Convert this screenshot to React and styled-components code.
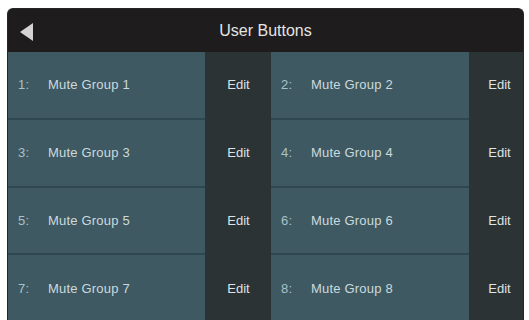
import React from 'react';
import styled, { createGlobalStyle } from 'styled-components';

const GlobalStyle = createGlobalStyle`
  html, body {
    margin: 0;
    padding: 0;
    background: #ffffff;
    font-family: "Liberation Sans", Arial, sans-serif;
  }
`;

const Page = styled.div`
  padding: 8px 5px 0 7px;
  height: 320px;
  box-sizing: border-box;
  overflow: hidden;
`;

const Panel = styled.div`
  height: 312px;
  border: 1px solid #262626;
  border-bottom: none;
  border-radius: 6px 6px 0 0;
  overflow: hidden;
  background: #2c3334;
  display: flex;
  flex-direction: column;
`;

const Header = styled.header`
  height: 43px;
  flex-shrink: 0;
  position: relative;
  display: flex;
  align-items: center;
  justify-content: center;
  background: #1e1c1c;
  color: #e4e4e4;
  font-size: 16px;
`;

const Back = styled.button`
  position: absolute;
  left: 9px;
  top: 13px;
  width: 20px;
  height: 20px;
  padding: 0;
  border: none;
  background: none;
  display: flex;
  align-items: center;
  justify-content: center;
`;

const Grid = styled.div`
  flex: 1;
  display: grid;
  grid-template-columns: 197px 66px 198px 1fr;
  grid-template-rows: repeat(4, 1fr);
  row-gap: 2px;
  background: #2c3334;
`;

const Button = styled.div`
  display: flex;
  align-items: center;
  background: #3e5962;
  color: #ccdadd;
  font-size: 13px;
  letter-spacing: 0.2px;
  box-shadow: 0 2px 0 #2f474e;
`;

const Number = styled.span`
  width: 30px;
  padding-left: 10px;
  color: #a9c1c7;
`;

const Label = styled.span``;

const Edit = styled.div`
  display: flex;
  align-items: center;
  justify-content: center;
  color: #dfe3e3;
  font-size: 13px;
  padding-left: ${p => (p.last ? '7px' : '1px')};
`;

const groups = [1, 2, 3, 4, 5, 6, 7, 8];

export default function App() {
  return (
    <>
      <GlobalStyle />
      <Page>
        <Panel>
          <Header>
            <Back aria-label="Back">
              <svg width="14" height="18" viewBox="0 0 14 18">
                <polygon points="13,0 13,18 0,9" fill="#d4d4d4" />
              </svg>
            </Back>
            User Buttons
          </Header>
          <Grid>
            {groups.map(n => (
              <React.Fragment key={n}>
                <Button>
                  <Number>{n}:</Number>
                  <Label>Mute Group {n}</Label>
                </Button>
                <Edit last={n % 2 === 0}>Edit</Edit>
              </React.Fragment>
            ))}
          </Grid>
        </Panel>
      </Page>
    </>
  );
}
